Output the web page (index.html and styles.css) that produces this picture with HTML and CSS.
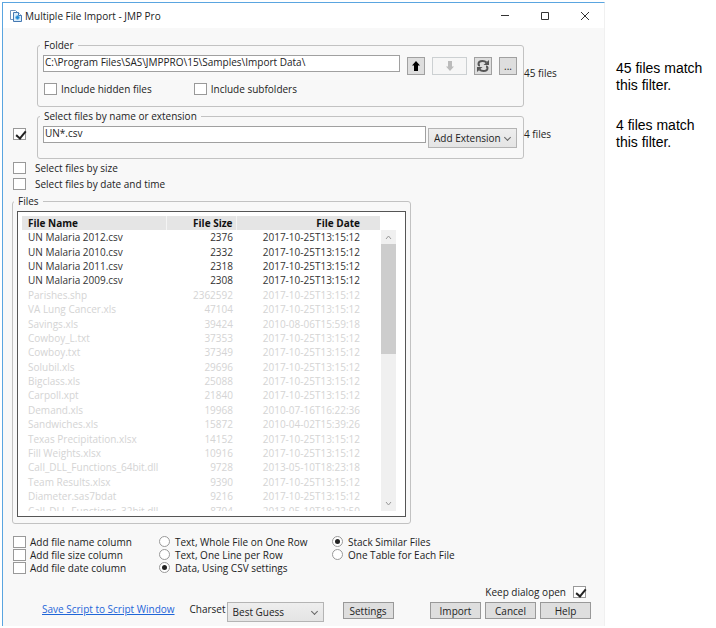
FILE: index.html
```html
<!DOCTYPE html>
<html lang="en">
<head>
<meta charset="utf-8">
<title>Multiple File Import - JMP Pro</title>
<link rel="stylesheet" href="styles.css">
</head>
<body>
<main class="dialog">
  <header class="titlebar">
    <svg class="app-icon" viewBox="0 0 12 12" width="12" height="12"><path d="M.5.5h5l2 2v7h-7z" fill="#fff" stroke="#6f93bd"/><path d="M3.5 2.5h5l3 3v6h-8z" fill="#d9ecfa" stroke="#4679b2"/><path d="M8.5 2.5v3h3" fill="#fff" stroke="#4679b2"/><path d="M7.5 5.500v4M5.500 7.500h4" stroke="#2389d5" stroke-width="2"/></svg>
    <h1>Multiple File Import - JMP Pro</h1>
    <div class="window-controls">
      <button type="button" aria-label="Minimize"><svg viewBox="0 0 10 10" width="10" height="10"><path d="M1 4.500h8"/></svg></button>
      <button type="button" aria-label="Maximize"><svg viewBox="0 0 10 10" width="10" height="10"><path d="M1.500 1.500h7v7h-7z"/></svg></button>
      <button type="button" aria-label="Close"><svg viewBox="0 0 10 10" width="10" height="10"><path d="M1 1l8 8M9 1L1 9"/></svg></button>
    </div>
  </header>

  <form class="content">
    <div class="filter-row folder-row">
      <fieldset>
        <legend>Folder</legend>
        <div class="path-row">
          <input class="text-box" type="text" aria-label="Folder path" value="C:\Program Files\SAS\JMPPRO\15\Samples\Import Data\">
          <div class="folder-buttons">
            <button class="tool" type="button" aria-label="Parent folder"><svg viewBox="0 0 10 10" width="10" height="10"><path d="M5 0l4 4.500H7V10H3V4.500H1z" fill="#000"/></svg></button>
            <button class="tool wide" type="button" aria-label="Next folder" disabled><svg viewBox="0 0 10 10" width="10" height="10"><path d="M5 10l4-4.500H7V0H3v5.500H1z" fill="#bbb"/></svg></button>
            <button class="tool" type="button" aria-label="Refresh"><svg viewBox="0 0 14 14" width="14" height="14"><path d="M10.500 3.500Q9 2 6.500 2Q2.500 2 2.500 5Q2.500 6.500 4 6.500M3.500 10.500Q5 12 7.500 12Q11.500 12 11.500 9Q11.500 7.500 10 7.500" fill="none" stroke="#555" stroke-width="2"/><path d="M7.500 6H13V1zM6.500 8H1v5z" fill="#555"/></svg></button>
            <button class="tool" type="button" aria-label="Browse">...</button>
          </div>
        </div>
        <div class="include-row">
          <label><input type="checkbox">Include hidden files</label>
          <label><input type="checkbox">Include subfolders</label>
        </div>
      </fieldset>
      <output>45 files</output>
    </div>

    <div class="filter-row name-row">
      <input type="checkbox" aria-label="Select files by name or extension" checked>
      <fieldset>
        <legend>Select files by name or extension</legend>
        <div class="name-line">
          <input class="text-box" type="text" aria-label="Name filter" value="UN*.csv">
          <span class="dropdown extension"><select aria-label="Add extension"><option>Add Extension</option></select></span>
        </div>
      </fieldset>
      <output>4 files</output>
    </div>

    <div class="more-filters">
      <label><input type="checkbox">Select files by size</label>
      <label><input type="checkbox">Select files by date and time</label>
    </div>

    <fieldset class="files">
      <legend>Files</legend>
      <div class="list">
        <div class="rows">
          <table>
            <thead><tr><th>File Name</th><th>File Size</th><th>File Date</th></tr></thead>
            <tbody>
              <tr class="match"><td>UN Malaria 2012.csv</td><td>2376</td><td>2017-10-25T13:15:12</td></tr>
              <tr class="match"><td>UN Malaria 2010.csv</td><td>2332</td><td>2017-10-25T13:15:12</td></tr>
              <tr class="match"><td>UN Malaria 2011.csv</td><td>2318</td><td>2017-10-25T13:15:12</td></tr>
              <tr class="match"><td>UN Malaria 2009.csv</td><td>2308</td><td>2017-10-25T13:15:12</td></tr>
              <tr><td>Parishes.shp</td><td>2362592</td><td>2017-10-25T13:15:12</td></tr>
              <tr><td>VA Lung Cancer.xls</td><td>47104</td><td>2017-10-25T13:15:12</td></tr>
              <tr><td>Savings.xls</td><td>39424</td><td>2010-08-06T15:59:18</td></tr>
              <tr><td>Cowboy_L.txt</td><td>37353</td><td>2017-10-25T13:15:12</td></tr>
              <tr><td>Cowboy.txt</td><td>37349</td><td>2017-10-25T13:15:12</td></tr>
              <tr><td>Solubil.xls</td><td>29696</td><td>2017-10-25T13:15:12</td></tr>
              <tr><td>Bigclass.xls</td><td>25088</td><td>2017-10-25T13:15:12</td></tr>
              <tr><td>Carpoll.xpt</td><td>21840</td><td>2017-10-25T13:15:12</td></tr>
              <tr><td>Demand.xls</td><td>19968</td><td>2010-07-16T16:22:36</td></tr>
              <tr><td>Sandwiches.xls</td><td>15872</td><td>2010-04-02T15:39:26</td></tr>
              <tr><td>Texas Precipitation.xlsx</td><td>14152</td><td>2017-10-25T13:15:12</td></tr>
              <tr><td>Fill Weights.xlsx</td><td>10916</td><td>2017-10-25T13:15:12</td></tr>
              <tr><td>Call_DLL_Functions_64bit.dll</td><td>9728</td><td>2013-05-10T18:23:18</td></tr>
              <tr><td>Team Results.xlsx</td><td>9390</td><td>2017-10-25T13:15:12</td></tr>
              <tr><td>Diameter.sas7bdat</td><td>9216</td><td>2017-10-25T13:15:12</td></tr>
              <tr><td>Call_DLL_Functions_32bit.dll</td><td>8704</td><td>2013-05-10T18:22:50</td></tr>
            </tbody>
          </table>
        </div>
        <div class="scrollbar" aria-hidden="true">
          <svg viewBox="0 0 15 14" width="15" height="14"><path d="M5 9l2.500-3L10 9"/></svg>
          <div class="thumb"></div>
          <svg class="down" viewBox="0 0 15 14" width="15" height="14"><path d="M5 5l2.500 3L10 5"/></svg>
        </div>
      </div>
    </fieldset>

    <div class="options">
      <div class="group">
        <label><input type="checkbox">Add file name column</label>
        <label><input type="checkbox">Add file size column</label>
        <label><input type="checkbox">Add file date column</label>
      </div>
      <div class="group">
        <label><input type="radio" name="mode">Text, Whole File on One Row</label>
        <label><input type="radio" name="mode">Text, One Line per Row</label>
        <label><input type="radio" name="mode" checked>Data, Using CSV settings</label>
      </div>
      <div class="group">
        <label><input type="radio" name="stack" checked>Stack Similar Files</label>
        <label><input type="radio" name="stack">One Table for Each File</label>
      </div>
    </div>

    <label class="keep-open">Keep dialog open<input type="checkbox" checked></label>

    <footer class="actions">
      <a href="#">Save Script to Script Window</a>
      <label for="charset">Charset</label>
      <span class="dropdown charset"><select id="charset"><option>Best Guess</option></select></span>
      <button class="push" type="button">Settings</button>
      <div class="confirm">
        <button class="push" type="submit">Import</button>
        <button class="push" type="button">Cancel</button>
        <button class="push" type="button">Help</button>
      </div>
    </footer>
  </form>
</main>

<aside class="notes">
  <p>45 files match<br>this filter.</p>
  <p>4 files match<br>this filter.</p>
</aside>
</body>
</html>
```
FILE: styles.css
```css
* { box-sizing: border-box; }

body {
  margin: 0;
  padding: 2px 0 2px 2px;
  display: flex;
  align-items: flex-start;
  background: #fff;
  color: #222;
  font: 10px/14px "Open Sans", "Noto Sans", sans-serif;
}

input, select, button { margin: 0; font: inherit; color: inherit; }
h1, p { margin: 0; font-weight: normal; }

/* Window frame */
.dialog {
  flex: 1;
  min-width: 0;
  border-top: 1px solid #5aa5e0;
  border-left: 1px solid #5aa5e0;
  border-right: 1px solid #f0f0f0;
  background: #f8f8f8;
}
.titlebar {
  display: flex;
  align-items: center;
  height: 25px;
  padding: 0 14px 0 7px;
  background: #fff;
}
.app-icon { margin-right: 3px; }
h1 { font-size: 10px; line-height: 14px; }
.window-controls { display: flex; gap: 30px; margin-left: auto; }
.window-controls button {
  display: flex;
  padding: 0;
  border: 0;
  background: none;
}
.window-controls path { fill: none; stroke: #333; }

.content { padding: 10px 13px 4px 9px; }

/* Group boxes */
fieldset {
  min-width: 0;
  margin: 0;
  padding: 0 5px;
  border: 1px solid #c2c2c2;
  border-radius: 3px;
}
legend { margin-left: -3px; padding: 0 4px; }

/* Check boxes and radio buttons */
input[type="checkbox"],
input[type="radio"] {
  appearance: none;
  position: relative;
  flex: none;
  border: 1px solid #999;
  background: #fff;
}
input[type="checkbox"] { width: 13px; height: 12px; }
input[type="radio"] { width: 11px; height: 11px; border-radius: 50%; }
input[type="checkbox"]:checked::after {
  content: "";
  position: absolute;
  left: 4px;
  top: 0;
  width: 4px;
  height: 8px;
  border: solid #222;
  border-width: 0 2px 2px 0;
  transform: rotate(40deg);
}
input[type="radio"]:checked::after {
  content: "";
  position: absolute;
  inset: 2px;
  border-radius: 50%;
  background: #222;
}
label { display: flex; align-items: center; gap: 4px; white-space: nowrap; }

.text-box {
  flex: 1;
  min-width: 0;
  height: 17px;
  padding: 0 0 3px 1px;
  border: 1px solid #a0a0a0;
  background: #fff;
}

/* Filters */
.filter-row { display: flex; align-items: center; padding: 0 67px 0 1px; }
.filter-row fieldset { flex: 1; padding-right: 6px; }
.filter-row output { width: 0; white-space: nowrap; }
.folder-row fieldset { height: 69px; margin-left: 24px; }
.path-row { display: flex; align-items: flex-start; gap: 7px; padding-top: 3px; }
.folder-buttons { display: flex; gap: 7px; padding-top: 2px; }
.tool {
  display: flex;
  align-items: center;
  justify-content: center;
  width: 18px;
  height: 18px;
  padding: 0;
  border: 1px solid #a0a0a0;
  background: #dedede;
}
.tool.wide { width: 35px; border-color: #ccd0d2; background: #f6f6f6; }
.include-row { display: flex; gap: 42px; padding: 7px 0 0 1px; }

.name-row { margin-top: 2px; }
.name-row fieldset { height: 50px; margin-left: 11px; }
.name-line { display: flex; align-items: flex-start; gap: 2px; padding-top: 3px; }

.dropdown { position: relative; display: flex; }
.dropdown select {
  appearance: none;
  width: 100%;
  height: 20px;
  padding: 0 5px;
  border: 1px solid #b4b4b4;
  border-radius: 0;
  background: linear-gradient(#eee, #e4e4e4);
}
.dropdown::after {
  content: "";
  position: absolute;
  right: 7px;
  top: 7px;
  width: 4px;
  height: 4px;
  border: solid #666;
  border-width: 0 1px 1px 0;
  transform: rotate(45deg);
}
.extension { width: 89px; margin-top: 2px; }

.more-filters { display: flex; flex-direction: column; gap: 2px; padding: 2px 0 0 1px; }
.more-filters label { gap: 9px; }

/* File list */
.files { width: 399px; margin: 3px 0 0; padding: 3px 4px 6px; }
.list {
  display: flex;
  height: 306px;
  padding: 4px 9px 5px 4px;
  border: 1px solid #555;
  background: #fff;
}
.rows { flex: 1; height: 295px; overflow: hidden; }
table {
  width: 100%;
  height: 302px;
  border-collapse: collapse;
  table-layout: fixed;
  color: #d4d4d4;
}
th, td { padding: 0 3px 0 6px; text-align: right; white-space: nowrap; line-height: 14px; }
th { background: #e5e5e5; color: #111; }
th + th { border-left: 1px solid #f4f4f4; }
th:first-child, td:first-child { width: 144px; text-align: left; }
th:nth-child(2) { width: 70px; }
th:last-child, td:last-child { padding-right: 20px; }
.match { color: #333; }
.scrollbar {
  display: flex;
  flex-direction: column;
  width: 15px;
  margin: 14px 0 0 1px;
  background: #f0f0f0;
}
.scrollbar path { fill: none; stroke: #999; stroke-width: 1; }
.thumb { height: 110px; background: #cdcdcd; }
.down { margin-top: auto; }

/* Output options */
.options {
  display: grid;
  grid-template-columns: 146px 173px auto;
  padding: 11px 0 0 1px;
}
.group label { height: 13px; }
.group label:has([type="radio"]) { gap: 5px; }

.keep-open { justify-content: flex-end; gap: 7px; margin: 11px 5px 0 0; }

.actions { display: flex; align-items: flex-start; margin-top: 3px; padding-left: 30px; }
.actions a { color: #1f66d8; }
.actions > label { margin-left: 15px; }
.charset { width: 97px; margin-left: 1px; }
.push {
  width: 51px;
  height: 17px;
  padding: 0;
  line-height: 14px;
  border: 1px solid #999;
  background: #dedede;
}
.actions > .push { margin-left: 19px; }
.confirm { display: flex; gap: 4px; margin-left: auto; }

/* Margin notes */
.notes {
  display: flex;
  flex-direction: column;
  gap: 23px;
  width: 111px;
  padding: 58px 0 0 11px;
  color: #000;
  font: 14px/17px "Liberation Sans", Arial, sans-serif;
}
```
